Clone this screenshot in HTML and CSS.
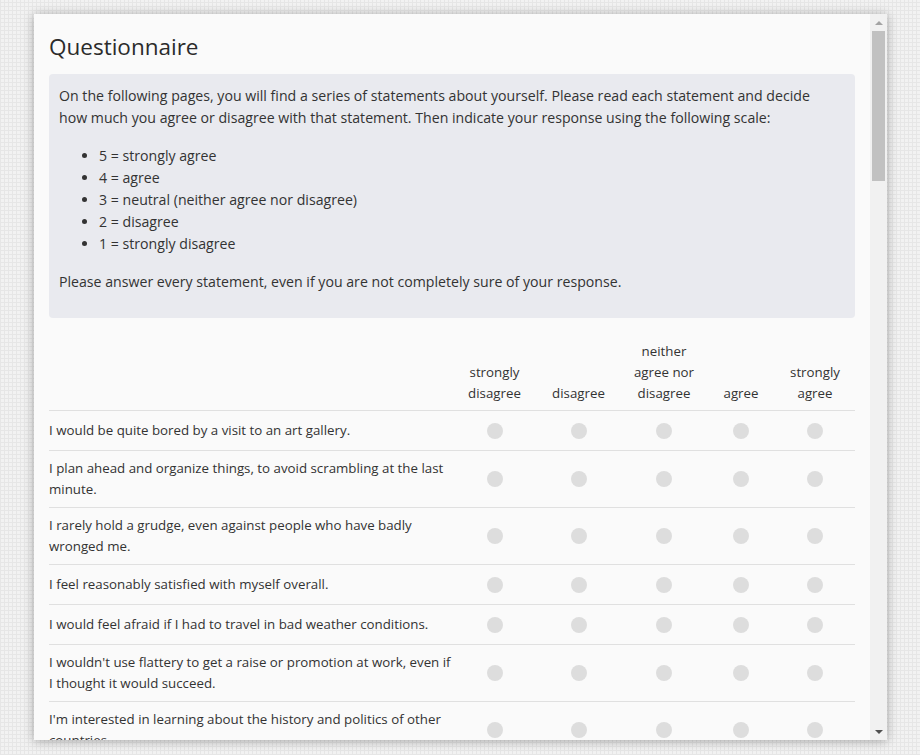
FILE: index.html
```html
<!DOCTYPE html>
<html lang="en">
<head>
<meta charset="utf-8">
<title>Questionnaire</title>
<link rel="stylesheet" href="styles.css">
</head>
<body>
<div class="panel">
  <div class="content">
    <h3 class="title">Questionnaire</h3>
    <div class="well">
      <p>On the following pages, you will find a series of statements about yourself. Please read each statement and decide how much you agree or disagree with that statement. Then indicate your response using the following scale:</p>
      <ul>
        <li>5 = strongly agree</li>
        <li>4 = agree</li>
        <li>3 = neutral (neither agree nor disagree)</li>
        <li>2 = disagree</li>
        <li>1 = strongly disagree</li>
      </ul>
      <p>Please answer every statement, even if you are not completely sure of your response.</p>
    </div>
    <div class="table">
      <div class="row head">
        <div class="q"></div>
        <div class="c">strongly<br>disagree</div>
        <div class="c">disagree</div>
        <div class="c">neither<br>agree nor<br>disagree</div>
        <div class="c">agree</div>
        <div class="c">strongly<br>agree</div>
      </div>
      <div class="row">
        <div class="q">I would be quite bored by a visit to an art gallery.</div>
        <div class="c"><span class="radio"></span></div><div class="c"><span class="radio"></span></div><div class="c"><span class="radio"></span></div><div class="c"><span class="radio"></span></div><div class="c"><span class="radio"></span></div>
      </div>
      <div class="row">
        <div class="q">I plan ahead and organize things, to avoid scrambling at the last minute.</div>
        <div class="c"><span class="radio"></span></div><div class="c"><span class="radio"></span></div><div class="c"><span class="radio"></span></div><div class="c"><span class="radio"></span></div><div class="c"><span class="radio"></span></div>
      </div>
      <div class="row">
        <div class="q">I rarely hold a grudge, even against people who have badly wronged me.</div>
        <div class="c"><span class="radio"></span></div><div class="c"><span class="radio"></span></div><div class="c"><span class="radio"></span></div><div class="c"><span class="radio"></span></div><div class="c"><span class="radio"></span></div>
      </div>
      <div class="row">
        <div class="q">I feel reasonably satisfied with myself overall.</div>
        <div class="c"><span class="radio"></span></div><div class="c"><span class="radio"></span></div><div class="c"><span class="radio"></span></div><div class="c"><span class="radio"></span></div><div class="c"><span class="radio"></span></div>
      </div>
      <div class="row">
        <div class="q">I would feel afraid if I had to travel in bad weather conditions.</div>
        <div class="c"><span class="radio"></span></div><div class="c"><span class="radio"></span></div><div class="c"><span class="radio"></span></div><div class="c"><span class="radio"></span></div><div class="c"><span class="radio"></span></div>
      </div>
      <div class="row">
        <div class="q">I wouldn't use flattery to get a raise or promotion at work, even if I thought it would succeed.</div>
        <div class="c"><span class="radio"></span></div><div class="c"><span class="radio"></span></div><div class="c"><span class="radio"></span></div><div class="c"><span class="radio"></span></div><div class="c"><span class="radio"></span></div>
      </div>
      <div class="row">
        <div class="q">I'm interested in learning about the history and politics of other countries.</div>
        <div class="c"><span class="radio"></span></div><div class="c"><span class="radio"></span></div><div class="c"><span class="radio"></span></div><div class="c"><span class="radio"></span></div><div class="c"><span class="radio"></span></div>
      </div>
    </div>
  </div>
  <div class="scrollbar">
    <div class="arrow up"></div>
    <div class="thumb"></div>
    <div class="track"></div>
    <div class="arrow down"></div>
  </div>
</div>
</body>
</html>
```

FILE: styles.css
```css
html, body {
  margin: 0;
  height: 100%;
}
body {
  background-color: #f2f2f2;
  background-image:
    repeating-linear-gradient(90deg, #e6e6e6 0 1px, transparent 1px 4px),
    repeating-linear-gradient(0deg, #e6e6e6 0 1px, transparent 1px 4px);
  padding: 14px 0 0 34px;
  box-sizing: border-box;
  overflow: hidden;
  font-family: "Open Sans", "Liberation Sans", sans-serif;
  color: #333;
}
.panel {
  width: 853px;
  height: 726px;
  background: #fafafa;
  box-shadow: 0 1px 10px rgba(0, 0, 0, 0.32);
  display: flex;
  overflow: hidden;
}
.content {
  flex: 1;
  padding: 0 15px;
  overflow: hidden;
}
.title {
  font-size: 22.5px;
  font-weight: 400;
  line-height: 28px;
  margin: 19px 0 13px;
  color: #2b2b2b;
}
.well {
  background: #e9eaef;
  border-radius: 4px;
  padding: 11px 26px 9px 10px;
  font-size: 14.15px;
  line-height: 22px;
  margin-bottom: 20px;
}
.well p {
  margin: 0 0 16px;
}
.well ul {
  margin: 0 0 16px;
  padding-left: 40px;
}
.table {
  font-size: 13.3px;
  line-height: 21px;
}
.row {
  display: grid;
  grid-template-columns: 404px 83px 85px 86px 68px 80px;
  border-bottom: 1px solid #e0e0e0;
  min-height: 39px;
  align-items: center;
}
.row.head {
  align-items: end;
  padding: 3px 0 6px;
  min-height: 0;
}
.q {
  padding: 7px 0;
}
.c {
  text-align: center;
  display: flex;
  flex-direction: column;
  align-items: center;
  justify-content: center;
}
.head .c {
  display: block;
}
.radio {
  display: block;
  width: 16px;
  height: 16px;
  border-radius: 50%;
  background: #dddddd;
}
.scrollbar {
  width: 17px;
  flex: none;
  background: #f1f1f1;
  display: flex;
  flex-direction: column;
  align-items: center;
}
.arrow {
  height: 17px;
  width: 17px;
  display: flex;
  align-items: center;
  justify-content: center;
}
.arrow::before {
  content: "";
  width: 0;
  height: 0;
  border-left: 4px solid transparent;
  border-right: 4px solid transparent;
}
.arrow.up::before {
  border-bottom: 4px solid #a3a3a3;
}
.arrow.down::before {
  border-top: 4px solid #505050;
}
.thumb {
  width: 13px;
  height: 150px;
  background: #c1c1c1;
}
.track {
  flex: 1;
}
```
